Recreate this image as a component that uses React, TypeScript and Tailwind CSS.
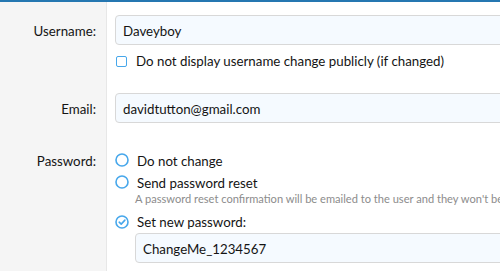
import React from "react";

const font = { fontFamily: 'Lato, "Noto Sans", sans-serif' };

function Radio({ checked }: { checked?: boolean }) {
  return (
    <svg width="14" height="14" viewBox="0 0 14 14" className="shrink-0">
      <circle cx="7" cy="7" r="6" fill="none" stroke="#47a7eb" strokeWidth="1.6" />
      {checked && (
        <path d="M4.2 7.2 L6.2 9.1 L9.9 5.1" fill="none" stroke="#47a7eb" strokeWidth="1.6" strokeLinecap="round" strokeLinejoin="round" />
      )}
    </svg>
  );
}

function Label({ children, h }: { children: React.ReactNode; h: string }) {
  return (
    <div className={`flex items-center justify-end pr-[10px] pt-[3px] text-[13.3px] text-[#141414] ${h}`}>{children}</div>
  );
}

export default function App() {
  return (
    <div className="w-[500px] h-[271px] overflow-hidden bg-white" style={font}>
      <div className="h-[2px] bg-[#2577b1]" />
      <div className="flex h-[269px]">
        <div className="w-[107px] shrink-0 bg-[#f5f5f5] border-r border-[#e7e7e7] pt-[13px]">
          <Label h="h-[30px]">Username:</Label>
          <div className="h-[48px]" />
          <Label h="h-[30px]">Email:</Label>
          <div className="h-[27px]" />
          <Label h="h-[20px]">Password:</Label>
        </div>
        <div className="flex-1 min-w-0 pl-[8px] pt-[13px] text-[13.3px] text-[#141414] overflow-hidden">
          <div className="h-[30px] w-[420px] rounded-[4px] border border-[#d8d8d8] bg-[#f5faff] flex items-center px-[7px] pt-[3px]">
            Daveyboy
          </div>
          <div className="flex items-center gap-[9px] h-[20px] mt-[6px] pl-[1px]">
            <span className="w-[11px] h-[11px] border-[1.5px] border-[#47a7eb] rounded-[2px] shrink-0" />
            <span className="pt-[2px]">Do not display username change publicly (if changed)</span>
          </div>
          <div className="h-[22px]" />
          <div className="h-[30px] w-[420px] rounded-[4px] border border-[#d8d8d8] bg-[#f5faff] flex items-center px-[7px] pt-[3px]">
            davidtutton@gmail.com
          </div>
          <div className="h-[27px]" />
          <div className="flex items-center gap-[8px] h-[20px]">
            <Radio />
            <span className="pt-[3px]">Do not change</span>
          </div>
          <div className="flex items-center gap-[8px] h-[20px] mt-[2px]">
            <Radio />
            <span className="pt-[3px]">Send password reset</span>
          </div>
          <div className="pl-[20px] mt-[-2px] pt-[1px] text-[11.1px] text-[#8c8c8c] whitespace-nowrap leading-[16px]">
            A password reset confirmation will be emailed to the user and they won't be able to log in
          </div>
          <div className="flex items-center gap-[8px] h-[20px] mt-[5px]">
            <Radio checked />
            <span className="pt-[2px]">Set new password:</span>
          </div>
          <div className="ml-[20px] mt-[1px] h-[30px] w-[420px] rounded-[4px] border border-[#d8d8d8] bg-[#f5faff] flex items-center px-[7px] pt-[3px]">
            ChangeMe_1234567
          </div>
        </div>
      </div>
    </div>
  );
}
